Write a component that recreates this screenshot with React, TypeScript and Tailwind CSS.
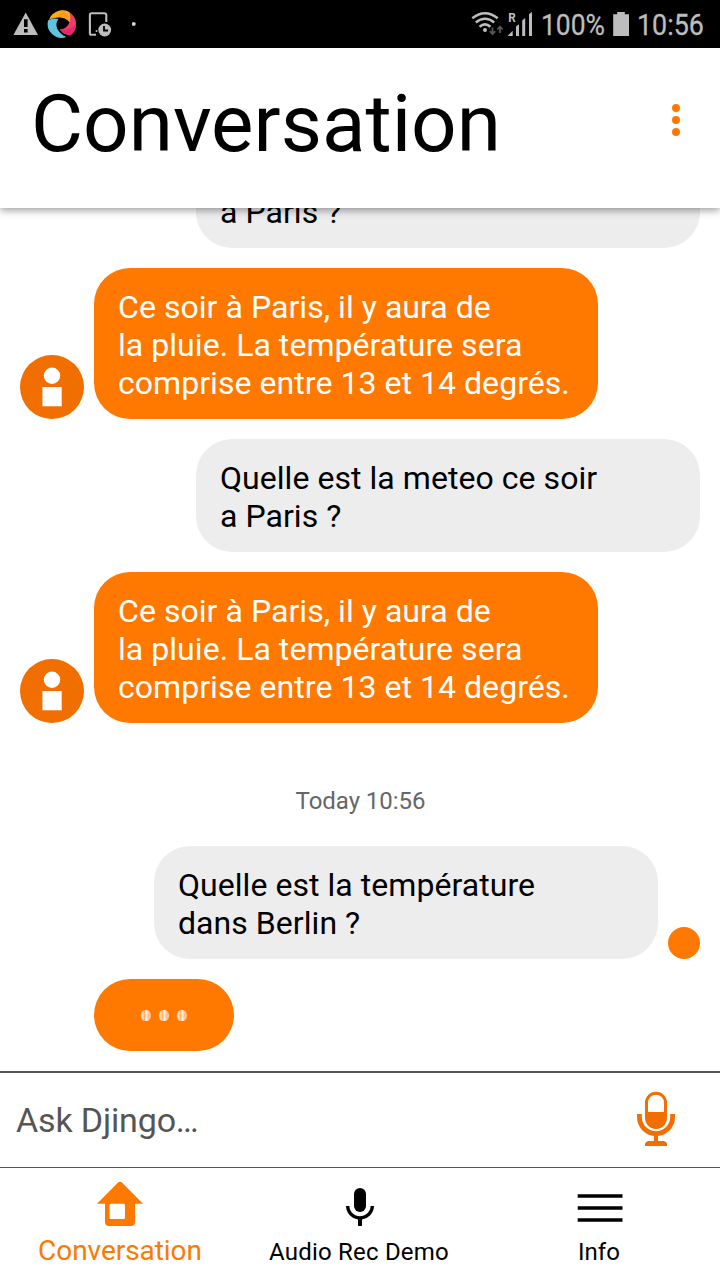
import type { ReactNode } from "react";

function StatusBar() {
  return (
    <div className="flex h-12 shrink-0 items-center bg-black">
      <svg className="h-12 w-40" viewBox="0 0 160 48">
        <path d="M25.7 12.5 38 35H13.4z" fill="#bdbdbd" />
        <path d="M24 19.3h3.6v7.7H24zM24 29h3.6v3.4H24z" fill="#000" />
        <path d="M49 20A14 14 0 0 1 69.5 12.2 13 13 0 0 1 70 23C67 17.5 58 15.5 49 20z" fill="#fcab1b" />
        <path d="M62 10a14 14 0 0 1 8 13C67 18 63 16.5 58 17z" fill="#f99a1c" />
        <path d="M69.5 12.2A14 14 0 0 1 70.5 35.3 14 14 0 0 1 59.5 29.3C67.5 29.5 72.5 21 69.5 12.2z" fill="#ef3a6b" />
        <path d="M76 23A14 14 0 0 1 70.5 35.3 14 14 0 0 1 60 29.3C67 31 73 28 76 23z" fill="#e5276a" />
        <path d="M48 20.5C52 18 56 18 58.5 19 53.5 25 58 33.5 66.5 37A14 14 0 0 1 48 20.5z" fill="#5ec4df" />
        <path d="M96 34.8h-4.5q-1.6 0-1.6-1.6V15q0-1.8 1.8-1.8h12.6q2 0 2 2V22" fill="none" stroke="#bdbdbd" strokeWidth="2.1" />
        <circle cx="96.5" cy="31" r="1" fill="#bdbdbd" />
        <circle cx="104.7" cy="30" r="6.4" fill="#bdbdbd" />
        <path d="M104 26v4.5h4" fill="none" stroke="#000" strokeWidth="1.8" />
        <rect x="132" y="22.3" width="3.5" height="3.5" rx="1" fill="#d6d6d6" />
      </svg>
      <svg className="ml-auto h-12 w-[260px]" viewBox="460 0 260 48">
        <g fill="none" stroke="#bdbdbd" strokeWidth="2.5">
          <path d="M472.3 18.2Q485 8.2 497.7 18.2" />
          <path d="M475.8 22.5Q485 15 494.2 22.5" />
          <path d="M479.5 26.8Q485 22 490.5 26.8" />
        </g>
        <circle cx="485" cy="30" r="2" fill="#bdbdbd" />
        <path d="M492.5 27.5V34M489.8 31.2l2.7 3 2.7-3M500 33v-6.5M497.3 29.5l2.7-3 2.7 3" fill="none" stroke="#555" strokeWidth="1.8" />
        <path d="M507.5 36 512.7 30.8V36zM516 26.5l3-2.3V36h-3zM522.2 20.5l3-2.6V36h-3zM529 14.3l3-2.6V36h-3z" fill="#bdbdbd" />
        <text x="508.3" y="22" fontFamily="Roboto" fontSize="12" fontWeight="700" fill="#bdbdbd" textLength="7.5" lengthAdjust="spacingAndGlyphs">R</text>
        <text x="541" y="35.3" fontFamily="Roboto" fontSize="30" fill="#bdbdbd" stroke="#bdbdbd" strokeWidth="0.3" textLength="64" lengthAdjust="spacingAndGlyphs">100%</text>
        <path d="M613.2 14.3h4V12h7.6v2.3h4.2V36h-15.8z" fill="#bdbdbd" />
        <text x="637" y="35.3" fontFamily="Roboto" fontSize="30" fill="#bdbdbd" stroke="#bdbdbd" strokeWidth="0.3" textLength="67" lengthAdjust="spacingAndGlyphs">10:56</text>
      </svg>
    </div>
  );
}

function Bubble({ mine, children }: { mine?: boolean; children: ReactNode }) {
  return (
    <div
      className={
        "w-[504px] shrink-0 rounded-[36px] pt-5 pb-[17px] pl-6 text-[32px] leading-[38px] tracking-[0.05px] whitespace-nowrap " +
        (mine ? "bg-[#ededed] text-black" : "bg-[#ff7900] text-white")
      }
    >
      {children}
    </div>
  );
}

function BotAvatar() {
  return (
    <svg className="size-16 shrink-0" viewBox="0 0 64 64">
      <circle cx="32" cy="32" r="32" fill="#f16e00" />
      <circle cx="32" cy="20.7" r="8.2" fill="#fff" />
      <path d="M22.4 32h19.3v19.3H22.4z" fill="#fff" />
    </svg>
  );
}

function BotAnswer() {
  return (
    <div className="flex items-end gap-2.5 pl-5">
      <BotAvatar />
      <Bubble>
        Ce soir à Paris, il y aura de
        <br />
        la pluie. La température sera
        <br />
        comprise entre 13 et 14 degrés.
      </Bubble>
    </div>
  );
}

function TypingBubble() {
  return (
    <div className="ml-[94px] flex h-[72px] w-[140px] shrink-0 items-center justify-center rounded-full bg-[#ff7900]">
      <svg className="h-3 w-12" viewBox="0 0 48 12">
        {[5.9, 23.9, 41.9].map((x) => (
          <g key={x}>
            <ellipse cx={x} cy="6.6" rx="5.2" ry="5.9" fill="#ffc08a" />
            <path d={`M${x + 0.6} 1v11.2`} stroke="#ffeedd" strokeWidth="2" />
            <path d={`M${x - 1.5} 1.5v10`} stroke="#ffb06a" strokeWidth="1" />
            <path d={`M${x - 3} 2.5v8`} stroke="#ffddbb" strokeWidth="1.6" />
          </g>
        ))}
      </svg>
    </div>
  );
}

export default function App() {
  return (
    <div className="flex h-[1280px] w-[720px] flex-col overflow-hidden bg-white font-['Roboto',sans-serif] text-black">
      <StatusBar />
      <header className="z-10 flex h-40 shrink-0 items-center justify-between bg-white pr-10 pl-8 shadow-[0_2px_8px_rgba(0,0,0,0.42)]">
        <h1 className="-ml-px pb-2 text-[80px] leading-none">Conversation</h1>
        <div className="flex flex-col gap-1 pb-4">
          <span className="size-2 rounded-full bg-[#ff7900]" />
          <span className="size-2 rounded-full bg-[#ff7900]" />
          <span className="size-2 rounded-full bg-[#ff7900]" />
        </div>
      </header>

      <main className="flex h-[863px] shrink-0 flex-col overflow-hidden">
        <div className="flex flex-col gap-5">
          <div className="flex h-10 items-end justify-end pr-5">
            <Bubble mine>a Paris ?</Bubble>
          </div>
          <BotAnswer />
          <div className="flex justify-end pr-5">
            <Bubble mine>
              Quelle est la meteo ce soir
              <br />a Paris ?
            </Bubble>
          </div>
          <BotAnswer />
        </div>
        <p className="mt-16 pl-px text-center text-2xl leading-7 tracking-[-0.05px] text-[#666]">Today 10:56</p>
        <div className="mt-[31px] flex items-end justify-end gap-2.5 pr-5">
          <Bubble mine>
            Quelle est la température
            <br />
            dans Berlin ?
          </Bubble>
          <span className="size-8 rounded-full bg-[#ff7900]" />
        </div>
        <div className="mt-5">
          <TypingBubble />
        </div>
      </main>

      <div className="flex h-24 shrink-0 items-center justify-between border-t-2 border-[#555] pr-11 pl-4">
        <span className="text-[34px] leading-10 tracking-[-0.15px] text-[#555]">Ask Djingo…</span>
        <svg className="mb-0.5 h-14 w-10" viewBox="636 1091 40 56">
          <rect x="646.5" y="1093.2" width="19" height="34.3" rx="9.5" fill="#fff" stroke="#f16e00" strokeWidth="3" />
          <path d="M646 1112h20v6a10 10 0 0 1-20 0z" fill="#f16e00" />
          <path d="M639.4 1114v3a16.6 16.6 0 0 0 33.2 0v-3" fill="none" stroke="#f16e00" strokeWidth="4.8" />
          <path d="M654 1135h4v6h6q3 1 3 3v2h-22v-2q0-2 3-3h6z" fill="#f16e00" />
        </svg>
      </div>

      <nav className="grid h-[113px] shrink-0 grid-cols-3 border-t border-[#555] text-2xl leading-8">
        <div className="flex flex-col items-center pt-3 text-[#ff7900]">
          <svg className="h-14 w-12" viewBox="96 1180 48 56" fill="currentColor">
            <path fillRule="evenodd" d="M97 1203.8 117.8 1182.7Q120 1180.7 122.2 1182.7L143 1203.8H135V1222Q135 1226 131 1226H109Q105 1226 105 1222V1203.8ZM111 1203.8Q109.5 1203.8 109.5 1205.3V1217.5Q109.5 1219 111 1219H123.5Q125 1219 125 1217.5V1205.3Q125 1203.8 123.5 1203.8Z" />
          </svg>
          <span className="-mt-px text-[28px] leading-8 tracking-[-0.05px]">Conversation</span>
        </div>
        <div className="flex flex-col items-center pt-4">
          <svg className="size-12" viewBox="0 0 24 24">
            <rect x="9" y="2" width="6" height="12" rx="3" />
            <path d="M17.3 11c0 3-2.54 5.1-5.3 5.1S6.7 14 6.7 11H5c0 3.41 2.72 6.23 6 6.72V21h2v-3.28c3.28-.48 6-3.3 6-6.72h-1.7z" />
          </svg>
          <span className="mt-1 pr-0.5 tracking-[0.2px]">Audio Rec Demo</span>
        </div>
        <div className="flex flex-col items-center pt-4">
          <svg className="size-12" viewBox="0 0 48 48">
            <path d="M1.7 12H46.5M1.7 24H46.5M1.7 36H46.5" stroke="#000" strokeWidth="3.6" />
          </svg>
          <span className="mt-1 pr-0.5 tracking-[0.1px]">Info</span>
        </div>
      </nav>
    </div>
  );
}
